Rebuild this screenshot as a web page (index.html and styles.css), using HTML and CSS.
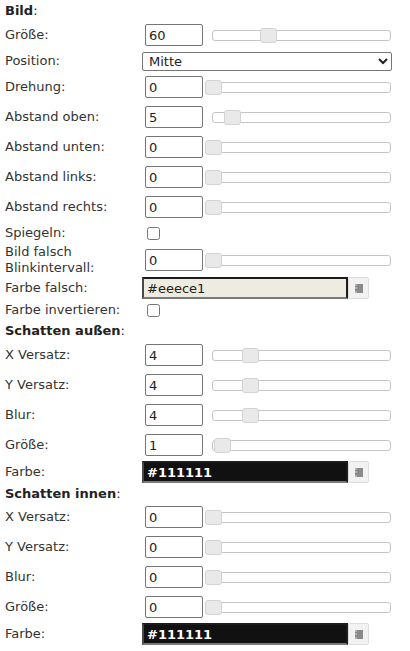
FILE: index.html
```html
<html>
<head>
    <title>Bild Eigenschaften</title>
    <link rel="stylesheet" href="styles.css">
</head>
<body>
    <div id="props">

        <div class="row head"><b>Bild</b>:</div>

        <div class="row slide">
            <div class="label">Größe:</div>
            <div class="value">
                <input class="num" type="text" value="60">
                <div class="track"><span class="handle" style="left: 31%"></span></div>
            </div>
        </div>

        <div class="row pick">
            <div class="label">Position:</div>
            <div class="value">
                <select class="sel">
                    <option>Mitte</option>
                    <option>Oben</option>
                    <option>Unten</option>
                </select>
            </div>
        </div>

        <div class="row slide">
            <div class="label">Drehung:</div>
            <div class="value">
                <input class="num" type="text" value="0">
                <div class="track"><span class="handle" style="left: 0%"></span></div>
            </div>
        </div>

        <div class="row slide">
            <div class="label">Abstand oben:</div>
            <div class="value">
                <input class="num" type="text" value="5">
                <div class="track"><span class="handle" style="left: 11%"></span></div>
            </div>
        </div>

        <div class="row slide">
            <div class="label">Abstand unten:</div>
            <div class="value">
                <input class="num" type="text" value="0">
                <div class="track"><span class="handle" style="left: 0%"></span></div>
            </div>
        </div>

        <div class="row slide">
            <div class="label">Abstand links:</div>
            <div class="value">
                <input class="num" type="text" value="0">
                <div class="track"><span class="handle" style="left: 0%"></span></div>
            </div>
        </div>

        <div class="row slide">
            <div class="label">Abstand rechts:</div>
            <div class="value">
                <input class="num" type="text" value="0">
                <div class="track"><span class="handle" style="left: 0%"></span></div>
            </div>
        </div>

        <div class="row check">
            <div class="label">Spiegeln:</div>
            <div class="value"><input class="box" type="checkbox"></div>
        </div>

        <div class="row slide tall">
            <div class="label">Bild falsch Blinkintervall:</div>
            <div class="value">
                <input class="num" type="text" value="0">
                <div class="track"><span class="handle" style="left: 0%"></span></div>
            </div>
        </div>

        <div class="row colour">
            <div class="label">Farbe falsch:</div>
            <div class="value">
                <input class="col light" type="text" value="#eeece1">
                <button class="col-btn"><span class="pad"></span></button>
            </div>
        </div>

        <div class="row check short">
            <div class="label">Farbe invertieren:</div>
            <div class="value"><input class="box" type="checkbox"></div>
        </div>

        <div class="row head"><b>Schatten außen</b>:</div>

        <div class="row slide">
            <div class="label">X Versatz:</div>
            <div class="value">
                <input class="num" type="text" value="4">
                <div class="track"><span class="handle" style="left: 21%"></span></div>
            </div>
        </div>

        <div class="row slide">
            <div class="label">Y Versatz:</div>
            <div class="value">
                <input class="num" type="text" value="4">
                <div class="track"><span class="handle" style="left: 21%"></span></div>
            </div>
        </div>

        <div class="row slide">
            <div class="label">Blur:</div>
            <div class="value">
                <input class="num" type="text" value="4">
                <div class="track"><span class="handle" style="left: 21%"></span></div>
            </div>
        </div>

        <div class="row slide">
            <div class="label">Größe:</div>
            <div class="value">
                <input class="num" type="text" value="1">
                <div class="track"><span class="handle" style="left: 5%"></span></div>
            </div>
        </div>

        <div class="row colour">
            <div class="label">Farbe:</div>
            <div class="value">
                <input class="col dark" type="text" value="#111111">
                <button class="col-btn"><span class="pad"></span></button>
            </div>
        </div>

        <div class="row head tight"><b>Schatten innen</b>:</div>

        <div class="row slide">
            <div class="label">X Versatz:</div>
            <div class="value">
                <input class="num" type="text" value="0">
                <div class="track"><span class="handle" style="left: 0%"></span></div>
            </div>
        </div>

        <div class="row slide">
            <div class="label">Y Versatz:</div>
            <div class="value">
                <input class="num" type="text" value="0">
                <div class="track"><span class="handle" style="left: 0%"></span></div>
            </div>
        </div>

        <div class="row slide">
            <div class="label">Blur:</div>
            <div class="value">
                <input class="num" type="text" value="0">
                <div class="track"><span class="handle" style="left: 0%"></span></div>
            </div>
        </div>

        <div class="row slide">
            <div class="label">Größe:</div>
            <div class="value">
                <input class="num" type="text" value="0">
                <div class="track"><span class="handle" style="left: 0%"></span></div>
            </div>
        </div>

        <div class="row colour">
            <div class="label">Farbe:</div>
            <div class="value">
                <input class="col dark" type="text" value="#111111">
                <button class="col-btn"><span class="pad"></span></button>
            </div>
        </div>

        <div class="row head last"><b>Umrandung</b>:</div>

    </div>
</body>
</html>
```

FILE: styles.css
```css
body {
    background: #ffffff;
    color: #333333;
    font-family: 'DejaVu Sans', Verdana, sans-serif;
    font-size: 13px;
    margin: 0px;
    padding: 0px;
    overflow: hidden;
}

#props {
    padding-left: 5px;
}

.row {
    display: flex;
    align-items: center;
}

.head {
    height: 20px;
    color: #222222;
}

.tight {
    height: 18px;
}

/* only the top edge of this one peeks in at the bottom */
.last {
    margin-top: 3px;
}

.slide {
    height: 30px;
}

.tall {
    height: 32px;
}

.pick,
.check {
    height: 22px;
}

.colour {
    height: 24px;
}

.short {
    height: 20px;
}

.label {
    width: 137px;
    flex-shrink: 0;
    line-height: 16px;
}

.value {
    display: flex;
    align-items: center;
}

.num {
    width: 58px;
    height: 22px;
    box-sizing: border-box;
    margin: 0px 0px 0px 3px;
    padding: 0px 3px;
    border: 1px solid #767676;
    border-radius: 2px;
    font-family: 'DejaVu Sans', Verdana, sans-serif;
    font-size: 13px;
    color: #222222;
}

.track {
    position: relative;
    width: 179px;
    height: 11px;
    box-sizing: border-box;
    margin-left: 9px;
    border: 1px solid #c5c5c5;
    border-radius: 3px;
    background: #ffffff;
}

.handle {
    position: absolute;
    top: -3px;
    width: 17px;
    height: 15px;
    margin-left: -8px;
    box-sizing: border-box;
    border: 1px solid #d3d3d3;
    border-radius: 3px;
    background: #e9e9e9;
}

.sel {
    width: 250px;
    height: 19px;
    margin: 0px;
    padding: 0px 0px 0px 2px;
    border: 1px solid #767676;
    border-radius: 2px;
    background: #ffffff;
    font-family: 'DejaVu Sans', Verdana, sans-serif;
    font-size: 13px;
    color: #222222;
}

.box {
    width: 13px;
    height: 13px;
    margin: 0px 0px 0px 5px;
}

.col {
    width: 206px;
    height: 22px;
    box-sizing: border-box;
    margin: 0px;
    padding: 0px 3px;
    border: 2px solid #1c1c1c;
    border-bottom-color: #7a7a7a;
    border-left-color: #4a4a4a;
    font-family: 'DejaVu Sans', Verdana, sans-serif;
    font-size: 13px;
}

.light {
    background: #eeece1;
    color: #222222;
}

.dark {
    background: #111111;
    color: #ffffff;
    font-weight: bold;
}

.col-btn {
    width: 21px;
    height: 22px;
    box-sizing: border-box;
    margin: 0px;
    padding: 0px;
    border: 1px solid #dddddd;
    border-radius: 2px;
    background: #f2f2f2;
    display: flex;
    align-items: center;
    justify-content: center;
}

.pad {
    display: block;
    width: 6px;
    height: 9px;
    background: #8a8a8a;
    border-left: 2px dotted #b0b0b0;
}
```
